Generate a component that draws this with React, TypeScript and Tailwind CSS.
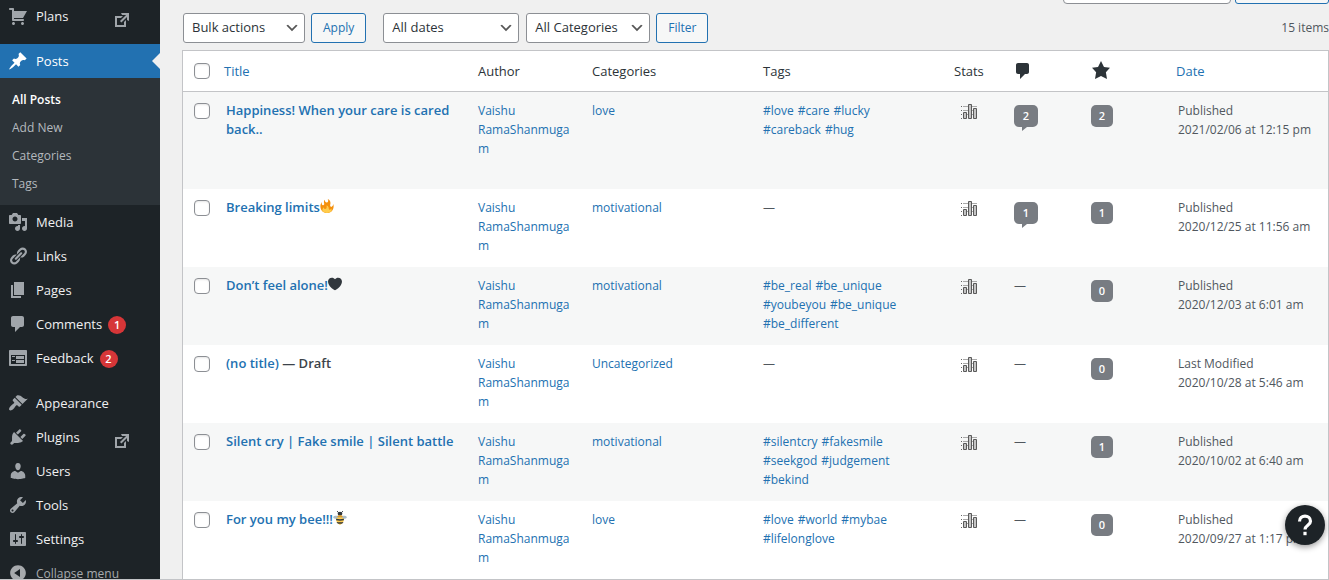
import type { ReactNode } from "react";

const ICONS = {
  cart: "M6 13h9c.55 0 1 .45 1 1s-.45 1-1 1H5c-.55 0-1-.45-1-1V4H2c-.55 0-1-.45-1-1s.45-1 1-1h3c.55 0 1 .45 1 1v2h13l-4 7H6v1zm-.5 3c.83 0 1.5.67 1.5 1.5S6.33 19 5.5 19 4 18.33 4 17.5 4.67 16 5.5 16zm9 0c.83 0 1.5.67 1.5 1.5s-.67 1.5-1.5 1.5-1.5-.67-1.5-1.5.67-1.5 1.5-1.5z",
  post: "M10.44 3.02l1.82-1.82 6.36 6.35-1.83 1.82c-1.05-.68-2.48-.57-3.41.36l-.75.75c-.92.93-1.04 2.35-.35 3.41l-1.83 1.82-2.41-2.41-2.8 2.79c-.42.42-3.38 2.71-3.8 2.29s1.86-3.39 2.28-3.81l2.79-2.79L4.1 9.36l1.83-1.82c1.05.69 2.48.57 3.4-.36l.75-.75c.93-.92 1.05-2.35.36-3.41z",
  media: "M13 11V4c0-.55-.45-1-1-1h-1.67L9 1H5L3.67 3H2c-.55 0-1 .45-1 1v7c0 .55.45 1 1 1h10c.55 0 1-.45 1-1zM7 4.5c1.38 0 2.5 1.12 2.5 2.5S8.38 9.5 7 9.5 4.5 8.38 4.5 7 5.62 4.5 7 4.5zM14 6h5v10.5c0 1.38-1.12 2.5-2.5 2.5S14 17.88 14 16.5s1.12-2.5 2.5-2.5c.17 0 .34.02.5.05V9h-3V6zm-4 8.05V13h2v3.5c0 1.38-1.12 2.5-2.5 2.5S7 17.88 7 16.5 8.12 14 9.5 14c.17 0 .34.02.5.05z",
  links: "M17.74 2.76c1.68 1.69 1.68 4.41 0 6.1l-1.53 1.52c-1.12 1.12-2.7 1.47-4.14 1.09l2.62-2.61.76-.77.76-.76c.84-.84.84-2.2 0-3.04-.84-.85-2.2-.85-3.04 0l-.77.76-3.38 3.38c-.37-1.44-.02-3.02 1.1-4.14l1.52-1.53c1.69-1.68 4.42-1.68 6.1 0zM8.59 13.43l5.34-5.34c.42-.42.42-1.1 0-1.52-.44-.43-1.13-.39-1.53 0l-5.33 5.34c-.42.42-.42 1.1 0 1.52.44.43 1.13.39 1.52 0zm-.76 2.29l4.14-4.15c.38 1.44.03 3.02-1.09 4.14l-1.52 1.53c-1.69 1.68-4.41 1.68-6.1 0-1.68-1.68-1.68-4.42 0-6.1l1.53-1.52c1.12-1.12 2.7-1.47 4.14-1.1l-4.14 4.15c-.85.84-.85 2.2 0 3.05.84.84 2.2.84 3.04 0z",
  page: "M6 15V2h10v13H6zm-1 1h8v2H3V5h2v11z",
  comments: "M5 2h9c1.1 0 2 .9 2 2v7c0 1.1-.9 2-2 2h-2l-5 5v-5H5c-1.1 0-2-.9-2-2V4c0-1.1.9-2 2-2z",
  feedback: "M2 2h16c.55 0 1 .45 1 1v14c0 .55-.45 1-1 1H2c-.55 0-1-.45-1-1V3c0-.55.45-1 1-1zm15 14V7H3v9h14zM4 8v1h3V8H4zm4 0v3h8V8H8zm-4 4v1h3v-1H4zm4 0v3h8v-3H8z",
  appearance: "M14.48 11.06L7.41 3.99l1.5-1.5c.5-.56 2.3-.47 3.51.32 1.21.8 1.43 1.28 2.91 2.1 1.18.64 2.45 1.26 4.45.85zm-.71.71L6.7 4.7 4.93 6.47c-.39.39-.39 1.02 0 1.41l1.06 1.06c.39.39.39 1.03 0 1.42-.6.6-1.43 1.11-2.21 1.69-.35.26-.7.53-1.01.84C1.43 14.23.4 16.08 1.4 17.07c.99 1 2.84-.03 4.18-1.36.31-.31.58-.66.85-1.02.57-.78 1.08-1.61 1.69-2.21.39-.39 1.02-.39 1.41 0l1.06 1.06c.39.39 1.02.39 1.41 0z",
  plugins: "M13.11 4.36L9.87 7.6 8 5.73l3.24-3.24c.35-.34 1.05-.2 1.56.32.52.51.66 1.21.31 1.55zm-8 1.77l.91-1.12 9.01 9.01-1.19.84c-.71.71-2.63 1.16-3.82 1.16H6.14L4.9 17.26c-.59.59-1.54.59-2.12 0-.59-.58-.59-1.53 0-2.12l1.24-1.24v-3.88c0-1.13.4-3.19 1.09-3.89zm7.26 3.97l3.24-3.24c.34-.35 1.04-.21 1.55.31.52.51.66 1.21.31 1.55l-3.24 3.25z",
  users: "M10 9.25c-2.27 0-2.73-3.44-2.73-3.44C7 4.02 7.82 2 9.97 2c2.16 0 2.98 2.02 2.71 3.81 0 0-.41 3.44-2.68 3.44zm0 2.57L12.72 10c2.39 0 4.52 2.33 4.52 4.53v2.49s-3.65 1.13-7.24 1.13c-3.65 0-7.24-1.13-7.24-1.13v-2.49c0-2.25 1.94-4.48 4.47-4.48z",
  tools: "M16.68 9.77c-1.34 1.34-3.3 1.67-4.95.99l-5.41 6.52c-.99.99-2.59.99-3.58 0s-.99-2.59 0-3.57l6.52-5.42c-.68-1.65-.35-3.61.99-4.95 1.28-1.28 3.12-1.62 4.72-1.06l-2.89 2.89 2.82 2.82 2.86-2.87c.53 1.58.18 3.39-1.08 4.65zM3.81 16.21c.4.39 1.04.39 1.43 0 .4-.4.4-1.04 0-1.43-.39-.4-1.03-.4-1.43 0-.39.39-.39 1.03 0 1.43z",
  settings: "M18 16V4c0-.55-.45-1-1-1H3c-.55 0-1 .45-1 1v12c0 .55.45 1 1 1h14c.55 0 1-.45 1-1zM8 11h1c.55 0 1 .45 1 1s-.45 1-1 1H8v1.5c0 .28-.22.5-.5.5s-.5-.22-.5-.5V13H6c-.55 0-1-.45-1-1s.45-1 1-1h1V5.5c0-.28.22-.5.5-.5s.5.22.5.5V11zm5-2h-1c-.55 0-1-.45-1-1s.45-1 1-1h1V5.5c0-.28.22-.5.5-.5s.5.22.5.5V7h1c.55 0 1 .45 1 1s-.45 1-1 1h-1v5.5c0 .28-.22.5-.5.5s-.5-.22-.5-.5V9z",
  external: "M9 3h8v8l-2-1V6.92l-5.6 5.59-1.41-1.41L14.08 5H10zm3 12v-3l2-2v7H3V6h8L9 8H5v7h7z",
  star: "M10 1l3 6 6 .75-4.12 4.62L16 19l-6-3-6 3 1.13-6.63L1 7.75 7 7z",
  collapse: "M10 2.16c4.33 0 7.84 3.51 7.84 7.84s-3.51 7.84-7.84 7.84S2.16 14.33 2.16 10 5.71 2.16 10 2.16zm2 11.72V6.12L6.18 9.97z",
  chevron: "M5 6l5 5 5-5 2 1-7 7-7-7 2-1z",
};

type IconName = keyof typeof ICONS;

function Icon({ name, className = "size-5" }: { name: IconName; className?: string }) {
  return (
    <svg viewBox="0 0 20 20" fill="currentColor" className={`shrink-0 ${className}`} aria-hidden="true">
      <path d={ICONS[name]} />
    </svg>
  );
}

function MenuItem({
  icon,
  label,
  count,
  external,
  active,
}: {
  icon: IconName;
  label: string;
  count?: number;
  external?: boolean;
  active?: boolean;
}) {
  return (
    <a
      href="#"
      className={`relative flex h-[34px] items-center text-[13px] ${active ? "bg-[#2271b1] text-white" : "text-[#f0f0f1]"}`}
    >
      <span className={`flex w-9 justify-center ${active ? "text-white" : "text-[#a0a5aa]"}`}>
        <Icon name={icon} />
      </span>
      <span className="pt-0.5">{label}</span>
      {count !== undefined && (
        <span className="mt-0.5 ml-1.5 flex size-[18px] items-center justify-center rounded-full bg-[#d63638] text-[11px] font-semibold text-white">
          {count}
        </span>
      )}
      {external && <Icon name="external" className="mt-2 mr-7 ml-auto size-5 text-[#a0a5aa]" />}
      {active && (
        <span className="absolute right-0 border-y-8 border-r-8 border-y-transparent border-r-[#f0f0f0]" />
      )}
    </a>
  );
}

function Sidebar() {
  return (
    <nav className="w-40 shrink-0 bg-[#1d2327]">
      <div className="-mt-px mb-[11px]">
        <MenuItem icon="cart" label="Plans" external />
      </div>
      <MenuItem icon="post" label="Posts" active />
      <ul className="bg-[#2c3338] pt-2 pb-[7px] text-xs">
        {["All Posts", "Add New", "Categories", "Tags"].map((t, i) => (
          <li key={t}>
            <a
              href="#"
              className={`flex h-7 items-center px-3 ${i === 0 ? "font-semibold text-white" : "text-[#b4b9be]"}`}
            >
              {t}
            </a>
          </li>
        ))}
      </ul>
      <div className="mb-[11px]">
        <MenuItem icon="media" label="Media" />
        <MenuItem icon="links" label="Links" />
        <MenuItem icon="page" label="Pages" />
        <MenuItem icon="comments" label="Comments" count={1} />
        <MenuItem icon="feedback" label="Feedback" count={2} />
      </div>
      <MenuItem icon="appearance" label="Appearance" />
      <MenuItem icon="plugins" label="Plugins" external />
      <MenuItem icon="users" label="Users" />
      <MenuItem icon="tools" label="Tools" />
      <MenuItem icon="settings" label="Settings" />
      <button type="button" className="flex h-[34px] w-full items-center text-xs text-[#a7aaad]">
        <span className="flex w-9 justify-center">
          <Icon name="collapse" />
        </span>
        <span className="pt-0.5">Collapse menu</span>
      </button>
    </nav>
  );
}

function Select({ label, value, className }: { label: string; value: string; className: string }) {
  return (
    <div className={`relative ${className}`}>
      <select
        aria-label={label}
        className="h-[30px] w-full appearance-none rounded-[3px] border border-[#8c8f94] bg-white pr-6 pl-2 text-[13px] text-[#2c3338]"
      >
        <option>{value}</option>
      </select>
      <span className="pointer-events-none absolute inset-y-0 right-[5px] flex items-center text-[#555]">
        <Icon name="chevron" className="size-4" />
      </span>
    </div>
  );
}

function ActionButton({ children }: { children: ReactNode }) {
  return (
    <button
      type="button"
      className="h-[30px] rounded-[3px] border border-[#2271b1] bg-[#f6f7f7] px-[11px] text-xs text-[#2271b1]"
    >
      {children}
    </button>
  );
}

function Check({ label }: { label: string }) {
  return (
    <input
      type="checkbox"
      aria-label={label}
      className="block size-4 appearance-none rounded border border-[#8c8f94] bg-white shadow-[inset_0_1px_2px_rgba(0,0,0,0.1)]"
    />
  );
}

function StatsIcon() {
  return (
    <svg viewBox="0 0 16 16" className="size-4" role="img" aria-label="Stats">
      <path d="M0 2.5h1M0 6.5h1M0 10.5h1M0 14.5h1" stroke="#666" />
      <path d="M2 2.5h14M2 6.5h10M2 10.5h12" stroke="#aaa" />
      <g fill="#c4c4c4" stroke="#5a5a5a">
        <path d="M2.5 8.5h3v6h-3zM7.5.5h3v14h-3zM12.5 4.5h3v10h-3z" />
      </g>
    </svg>
  );
}

function Fire() {
  return (
    <svg viewBox="0 0 36 36" className="inline size-3.5 align-[-1px]" role="img" aria-label="fire">
      <path
        fill="#F4900C"
        d="M35 19c0-2.062-.367-4.039-1.04-5.868-.46 5.389-3.333 8.157-6.335 6.868-2.812-1.208-.917-5.917-.777-8.164.236-3.809-.012-8.169-6.931-11.794 2.875 5.5.333 8.917-2.333 9.125-2.958.231-5.667-2.542-4.667-7.042-3.238 2.386-3.332 6.402-2.333 9 1.042 2.708-.042 4.958-2.583 5.208-2.84.28-4.418-3.041-2.963-8.333C2.52 10.965 1 14.805 1 19c0 9.389 7.611 17 17 17s17-7.611 17-17z"
      />
      <path
        fill="#FFCC4D"
        d="M28.394 23.999c.148 3.084-2.561 4.293-4.019 3.709-2.106-.843-1.541-2.291-2.083-5.291s-2.625-5.083-5.708-6c2.25 6.333-1.247 8.667-3.08 9.084-1.872.426-3.753-.001-3.968-4.007C7.352 23.668 6 26.676 6 30c0 .368.023.73.055 1.09C9.125 34.124 13.342 36 18 36s8.875-1.876 11.945-4.91c.032-.36.055-.722.055-1.09 0-2.187-.584-4.236-1.606-6.001z"
      />
    </svg>
  );
}

function Heart() {
  return (
    <svg viewBox="0 0 36 36" className="inline size-3.5 align-[-1px]" role="img" aria-label="black heart">
      <path
        fill="#31373D"
        d="M35.885 11.833c0-5.45-4.418-9.868-9.867-9.868-3.308 0-6.227 1.633-8.018 4.129-1.791-2.496-4.71-4.129-8.017-4.129-5.45 0-9.868 4.417-9.868 9.868 0 .772.098 1.52.266 2.241C1.751 22.587 11.216 31.568 18 34.034c6.783-2.466 16.249-11.447 17.617-19.959.17-.721.268-1.469.268-2.242z"
      />
    </svg>
  );
}

function Bee() {
  return (
    <svg viewBox="0 0 36 36" className="inline size-3.5 align-[-1px]" role="img" aria-label="bee">
      <path d="M10 0l5 5M26 0l-5 5" stroke="#31373D" strokeWidth="2.5" />
      <path d="M18 14C12 11 1 12 .5 16s10 6 17.500 3zM18 14c6-3 17-2 17.500 2s-10 6-17.500 3z" fill="#A9BBC8" />
      <ellipse cx="18" cy="7" rx="6" ry="5" fill="#31373D" />
      <ellipse cx="18" cy="14" rx="7" ry="3" fill="#DD9A22" />
      <path d="M9 18q9-3 18 0 3 6-1 11-3 4-8 7-5-3-8-7-4-5-1-11z" fill="#FFCC4D" />
      <path d="M8 20q10 2 20 0v4q-10 2-20 0zM9 28q9 2 18 0l-3 4q-6 1-12 0z" fill="#31373D" />
    </svg>
  );
}

type Post = {
  title: string;
  emoji?: ReactNode;
  draft?: boolean;
  category: string;
  tags: string[][];
  comments?: number;
  likes: number;
  status: string;
  date: string;
};

const POSTS: Post[] = [
  {
    title: "Happiness! When your care is cared back..",
    category: "love",
    tags: [["#love", "#care", "#lucky"], ["#careback", "#hug"]],
    comments: 2,
    likes: 2,
    status: "Published",
    date: "2021/02/06 at 12:15 pm",
  },
  { title: "Breaking limits", emoji: <Fire />, category: "motivational", tags: [], comments: 1, likes: 1, status: "Published", date: "2020/12/25 at 11:56 am" },
  {
    title: "Don’t feel alone!",
    emoji: <Heart />,
    category: "motivational",
    tags: [["#be_real", "#be_unique"], ["#youbeyou", "#be_unique"], ["#be_different"]],
    likes: 0,
    status: "Published",
    date: "2020/12/03 at 6:01 am",
  },
  { title: "(no title)", draft: true, category: "Uncategorized", tags: [], likes: 0, status: "Last Modified", date: "2020/10/28 at 5:46 am" },
  {
    title: "Silent cry | Fake smile | Silent battle",
    category: "motivational",
    tags: [["#silentcry", "#fakesmile"], ["#seekgod", "#judgement"], ["#bekind"]],
    likes: 1,
    status: "Published",
    date: "2020/10/02 at 6:40 am",
  },
  {
    title: "For you my bee!!!",
    emoji: <Bee />,
    category: "love",
    tags: [["#love", "#world", "#mybae"], ["#lifelonglove"]],
    likes: 0,
    status: "Published",
    date: "2020/09/27 at 1:17 pm",
  },
];

const cell = "pt-[9px] pl-2.5 align-top";
const bubble =
  "flex h-[22px] items-center justify-center rounded-[5px] bg-[#787c82] pb-0.5 text-[11px] font-semibold text-white";

function PostRow({ post, first }: { post: Post; first: boolean }) {
  return (
    <tr className={`odd:bg-[#f6f7f7] even:bg-white ${first ? "h-[97px]" : "h-[78px]"}`}>
      <td className="pt-[11px] pl-[11px] align-top">
        <Check label={`Select ${post.title}`} />
      </td>
      <td className={`${cell} text-[13px] leading-[19px] font-semibold text-[#3c434a]`}>
        <a href="#" className="text-[#2271b1]">
          {post.title}
          {post.emoji}
        </a>
        {post.draft && " — Draft"}
      </td>
      <td className={`${cell} pr-2.5`}>
        <a href="#" className="break-words text-[#2271b1]">
          Vaishu RamaShanmugam
        </a>
      </td>
      <td className={cell}>
        <a href="#" className="text-[#2271b1]">
          {post.category}
        </a>
      </td>
      <td className={cell}>
        {post.tags.length === 0 && "—"}
        {post.tags.map((line, i) => (
          <div key={i} className="flex gap-1">
            {line.map((t) => (
              <a key={t} href="#" className="text-[#2271b1]">
                {t}
              </a>
            ))}
          </div>
        ))}
      </td>
      <td className="pt-3 pl-[17px] align-top">
        <StatsIcon />
      </td>
      <td className={cell}>
        {post.comments === undefined ? (
          "—"
        ) : (
          <a href="#" className="mt-1 flex flex-col">
            <span className={`${bubble} w-6`}>{post.comments}</span>
            <span className="ml-2 w-0 border-t-4 border-r-[5px] border-t-[#787c82] border-r-transparent" />
          </a>
        )}
      </td>
      <td className={cell}>
        <a href="#" className={`${bubble} mt-1 w-[22px]`}>
          {post.likes}
        </a>
      </td>
      <td className="pt-[9px] pl-3 align-top whitespace-nowrap">
        {post.status}
        <br />
        {post.date}
      </td>
    </tr>
  );
}

export default function App() {
  return (
    <div className="relative flex h-screen overflow-hidden border-b border-[#c3c4c7] bg-[#f0f0f0] font-['Open_Sans','Noto_Sans',sans-serif] text-xs text-[#50575e]">
      <Sidebar />
      <main className="flex min-w-0 flex-1 flex-col pl-[22px]">
        <form className="flex h-1 items-end justify-end gap-1">
          <input
            type="search"
            aria-label="Search posts"
            className="h-[30px] w-[168px] rounded border border-[#8c8f94] bg-white"
          />
          <button
            type="button"
            aria-label="Search"
            className="h-[30px] w-[94px] rounded-[3px] border border-[#2271b1] bg-[#f6f7f7]"
          />
        </form>
        <div className="mt-[9px] mb-[7px] flex items-center pl-px">
          <Select label="Bulk actions" value="Bulk actions" className="mr-1.5 w-[122px]" />
          <ActionButton>Apply</ActionButton>
          <Select label="Filter by date" value="All dates" className="mr-[7px] ml-[17px] w-[136px]" />
          <Select label="Filter by category" value="All Categories" className="mr-1.5 w-[124px]" />
          <ActionButton>Filter</ActionButton>
          <span className="ml-auto">15 items</span>
        </div>
        <div className="border border-b-0 border-[#c3c4c7] bg-white">
          <table className="w-full table-fixed border-separate border-spacing-0 leading-[19px]">
            <colgroup>
              <col className="w-[33px]" />
              <col />
              <col className="w-[114px]" />
              <col className="w-[171px]" />
              <col className="w-[191px]" />
              <col className="w-[60px]" />
              <col className="w-[77px]" />
              <col className="w-[85px]" />
              <col className="w-[162px]" />
            </colgroup>
            <thead>
              <tr className="h-[41px] text-left text-[13px] text-[#2c3338] [&>th]:border-b [&>th]:border-[#c3c4c7] [&>th]:font-normal">
                <th className="pl-[11px]">
                  <Check label="Select all" />
                </th>
                <th className="pl-2">
                  <a href="#" className="text-[#2271b1]">
                    Title
                  </a>
                </th>
                <th className="pl-2.5">Author</th>
                <th className="pl-2.5">Categories</th>
                <th className="pl-2.5">Tags</th>
                <th className="pl-2.5">Stats</th>
                <th className="pl-[9px]" aria-label="Comments">
                  <Icon name="comments" />
                </th>
                <th className="pb-0.5 pl-2.5" aria-label="Likes">
                  <Icon name="star" />
                </th>
                <th className="pl-2.5">
                  <a href="#" className="text-[#2271b1]">
                    Date
                  </a>
                </th>
              </tr>
            </thead>
            <tbody>
              {POSTS.map((p, i) => (
                <PostRow key={p.title} post={p} first={i === 0} />
              ))}
            </tbody>
          </table>
        </div>
      </main>
      <button
        type="button"
        aria-label="Help"
        className="absolute right-1 bottom-[34px] flex size-10 items-center justify-center rounded-full bg-[#1d2327] text-white shadow-[0_2px_6px_rgba(0,0,0,0.4)]"
      >
        <svg viewBox="0 0 24 24" className="size-6" fill="none" stroke="currentColor" strokeWidth="3.2" aria-hidden="true">
          <path d="M6.5 8.5C6.5 5 9 3.2 12 3.2s5.500 1.900 5.500 5c0 4-5.500 4-5.500 8.300" />
          <path d="M12 18.800v3.400" />
        </svg>
      </button>
    </div>
  );
}
